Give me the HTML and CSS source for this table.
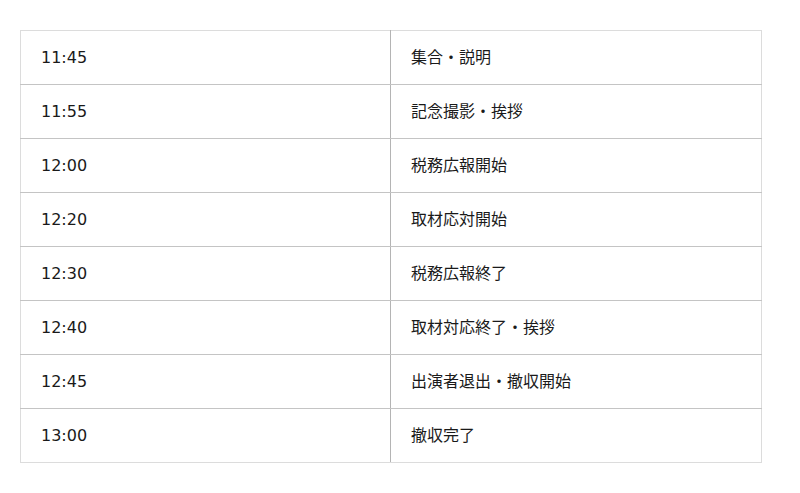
FILE: index.html
```html
<!DOCTYPE html>
<html lang="ja">
<head>
<meta charset="utf-8">
<link rel="stylesheet" href="styles.css">
</head>
<body>
<table class="schedule">
  <tbody>
    <tr><td class="time">11:45</td><td class="event">集合・説明</td></tr>
    <tr><td class="time">11:55</td><td class="event">記念撮影・挨拶</td></tr>
    <tr><td class="time">12:00</td><td class="event">税務広報開始</td></tr>
    <tr><td class="time">12:20</td><td class="event">取材応対開始</td></tr>
    <tr><td class="time">12:30</td><td class="event">税務広報終了</td></tr>
    <tr><td class="time">12:40</td><td class="event">取材対応終了・挨拶</td></tr>
    <tr><td class="time">12:45</td><td class="event">出演者退出・撤収開始</td></tr>
    <tr><td class="time">13:00</td><td class="event">撤収完了</td></tr>
  </tbody>
</table>
</body>
</html>
```
FILE: styles.css
```css
html, body {
  margin: 0;
  padding: 0;
  background: #fff;
}
body {
  padding: 30px 38px 0 20px;
  font-family: "DejaVu Sans", "Noto Sans CJK JP", sans-serif;
  font-size: 16px;
  color: #1a1a1a;
}
.schedule {
  width: 742px;
  border-collapse: collapse;
  border: 1px solid #dcdcdc;
}
.schedule td {
  height: 54px;
  padding: 0 20px;
  border-bottom: 1px solid #c4c4c4;
  vertical-align: middle;
  box-sizing: border-box;
  line-height: 20px;
}
.schedule tr:last-child td {
  border-bottom: 1px solid #dcdcdc;
}
.time {
  width: 370px;
  border-right: 1px solid #b4b4b4;
}
```
